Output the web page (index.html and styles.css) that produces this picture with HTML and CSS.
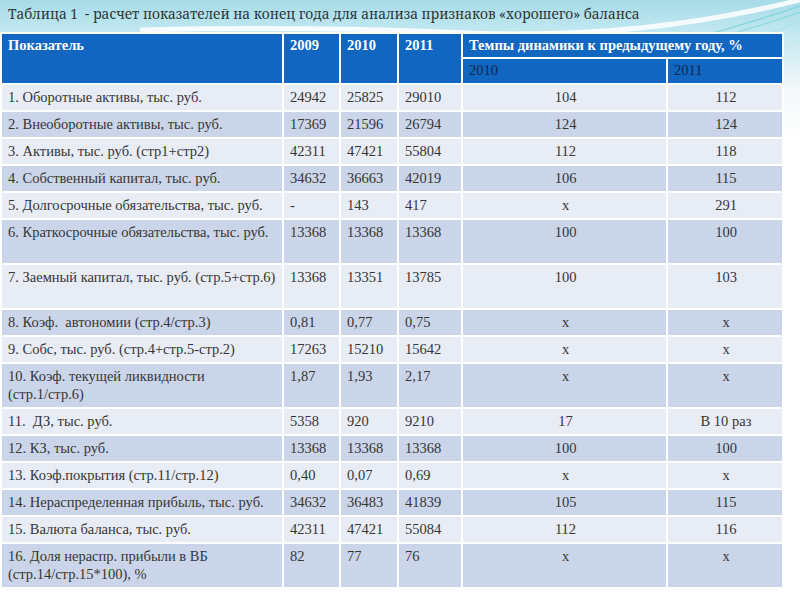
FILE: index.html
```html
<!DOCTYPE html>
<html lang="ru">
<head>
<meta charset="utf-8">
<link rel="stylesheet" href="styles.css">
</head>
<body>
<div class="slide">
  <svg class="swoosh" width="800" height="100" viewBox="0 0 800 100">
    <path d="M140 30 Q300 26 470 33 Q640 40 800 0" stroke="#ffffff" stroke-width="5" fill="none" opacity="0.85"/>
    <path d="M600 60 Q700 40 800 6" stroke="#7fd6d8" stroke-width="1.2" fill="none"/>
    <path d="M610 64 Q710 44 800 12" stroke="#8adbdc" stroke-width="1.2" fill="none"/>
    <path d="M640 70 Q730 50 800 22" stroke="#a6e3e4" stroke-width="1" fill="none"/>
    <path d="M700 80 Q760 60 800 40" stroke="#c2ecec" stroke-width="1" fill="none"/>
  </svg>
  <div class="title">Таблица 1&nbsp; - расчет показателей на конец года для анализа признаков «хорошего» баланса</div>
  <table class="grid">
    <colgroup>
      <col class="c1"><col class="c2"><col class="c3"><col class="c4"><col class="c5"><col class="c6">
    </colgroup>
    <thead>
      <tr class="h1">
        <th rowspan="2">Показатель</th>
        <th rowspan="2">2009</th>
        <th rowspan="2">2010</th>
        <th rowspan="2">2011</th>
        <th colspan="2">Темпы динамики к предыдущему году, %</th>
      </tr>
      <tr class="h2">
        <td>2010</td>
        <td>2011</td>
      </tr>
    </thead>
    <tbody>
      <tr class="lt"><td>1. Оборотные активы, тыс. руб.</td><td>24942</td><td>25825</td><td>29010</td><td class="ctr">104</td><td class="ctr">112</td></tr>
      <tr class="dk"><td>2. Внеоборотные активы, тыс. руб.</td><td>17369</td><td>21596</td><td>26794</td><td class="ctr">124</td><td class="ctr">124</td></tr>
      <tr class="lt"><td>3. Активы, тыс. руб. (стр1+стр2)</td><td>42311</td><td>47421</td><td>55804</td><td class="ctr">112</td><td class="ctr">118</td></tr>
      <tr class="dk"><td>4. Собственный капитал, тыс. руб.</td><td>34632</td><td>36663</td><td>42019</td><td class="ctr">106</td><td class="ctr">115</td></tr>
      <tr class="lt"><td>5. Долгосрочные обязательства, тыс. руб.</td><td>-</td><td>143</td><td>417</td><td class="ctr">х</td><td class="ctr">291</td></tr>
      <tr class="dk tall"><td>6. Краткосрочные обязательства, тыс. руб.</td><td>13368</td><td>13368</td><td>13368</td><td class="ctr">100</td><td class="ctr">100</td></tr>
      <tr class="lt tall"><td>7. Заемный капитал, тыс. руб. (стр.5+стр.6)</td><td>13368</td><td>13351</td><td>13785</td><td class="ctr">100</td><td class="ctr">103</td></tr>
      <tr class="dk"><td>8. Коэф.&nbsp; автономии (стр.4/стр.3)</td><td>0,81</td><td>0,77</td><td>0,75</td><td class="ctr">х</td><td class="ctr">х</td></tr>
      <tr class="lt"><td>9. Собс, тыс. руб. (стр.4+стр.5-стр.2)</td><td>17263</td><td>15210</td><td>15642</td><td class="ctr">х</td><td class="ctr">х</td></tr>
      <tr class="dk tall"><td>10. Коэф. текущей ликвидности<br>(стр.1/стр.6)</td><td>1,87</td><td>1,93</td><td>2,17</td><td class="ctr">х</td><td class="ctr">х</td></tr>
      <tr class="lt"><td>11.&nbsp; ДЗ, тыс. руб.</td><td>5358</td><td>920</td><td>9210</td><td class="ctr">17</td><td class="ctr">В 10 раз</td></tr>
      <tr class="dk"><td>12. КЗ, тыс. руб.</td><td>13368</td><td>13368</td><td>13368</td><td class="ctr">100</td><td class="ctr">100</td></tr>
      <tr class="lt"><td>13. Коэф.покрытия (стр.11/стр.12)</td><td>0,40</td><td>0,07</td><td>0,69</td><td class="ctr">х</td><td class="ctr">х</td></tr>
      <tr class="dk"><td>14. Нераспределенная прибыль, тыс. руб.</td><td>34632</td><td>36483</td><td>41839</td><td class="ctr">105</td><td class="ctr">115</td></tr>
      <tr class="lt"><td>15. Валюта баланса, тыс. руб.</td><td>42311</td><td>47421</td><td>55084</td><td class="ctr">112</td><td class="ctr">116</td></tr>
      <tr class="dk tall"><td>16. Доля нераспр. прибыли в ВБ<br>(стр.14/стр.15*100), %</td><td>82</td><td>77</td><td>76</td><td class="ctr">х</td><td class="ctr">х</td></tr>
    </tbody>
  </table>
</div>
</body>
</html>
```

FILE: styles.css
```css
html, body {
  margin: 0;
  padding: 0;
  background: #ffffff;
}

.slide {
  position: relative;
  width: 800px;
  height: 600px;
  overflow: hidden;
  background: linear-gradient(180deg, #a6dbe8 0px, #c0e7f0 30px, #f4f8fa 90px, #ffffff 140px);
}

.swoosh {
  position: absolute;
  left: 0;
  top: 0;
}

.title {
  position: relative;
  height: 32px;
  box-sizing: border-box;
  padding: 3px 0 0 8px;
  font-family: "Noto Serif", "Liberation Serif", serif;
  font-size: 13.7px;
  line-height: 22px;
  color: #2d3536;
  white-space: nowrap;
}

.grid {
  position: relative;
  width: 782px;
  table-layout: fixed;
  border-collapse: collapse;
  font-family: "Liberation Serif", serif;
  font-size: 14.5px;
  line-height: 18px;
  color: #363636;
}

.c1 { width: 282px; }
.c2 { width: 57px; }
.c3 { width: 58px; }
.c4 { width: 64px; }
.c5 { width: 205px; }
.c6 { width: 116px; }

.grid th,
.grid td {
  border: 2px solid #ffffff;
  padding: 3px 4px 4px 6px;
  vertical-align: top;
  text-align: left;
  white-space: nowrap;
}

.grid th {
  background: #1066c1;
  color: #ffffff;
  font-weight: bold;
  padding-top: 2px;
  padding-bottom: 2px;
}

.h1 { height: 25px; }
.h2 { height: 26px; }

.h2 td {
  background: #1066c1;
  color: #14284a;
  padding-top: 2px;
  padding-bottom: 2px;
}

.grid .ctr { text-align: center; }

.lt td { background: #e8ecf5; height: 18px; }
.dk td { background: #cbd5e9; height: 18px; }
.tall td { height: 36px; }
```
